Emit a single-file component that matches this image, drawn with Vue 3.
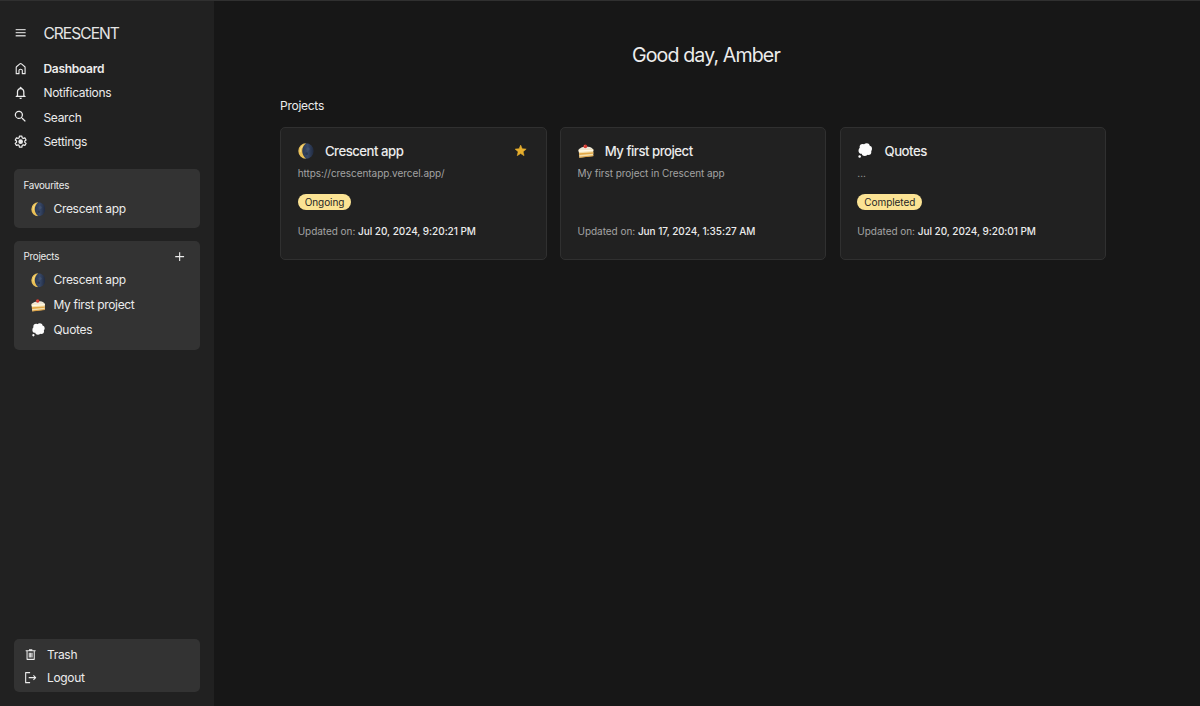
<script setup>
const nav = [
  { label: 'Dashboard', icon: 'home', active: true },
  { label: 'Notifications', icon: 'bell' },
  { label: 'Search', icon: 'search' },
  { label: 'Settings', icon: 'gear' },
]
const projects = [
  { name: 'Crescent app', icon: 'moon', desc: 'https://crescentapp.vercel.app/', status: 'Ongoing', updated: 'Jul 20, 2024, 9:20:21 PM', star: true },
  { name: 'My first project', icon: 'cake', desc: 'My first project in Crescent app', status: '', updated: 'Jun 17, 2024, 1:35:27 AM' },
  { name: 'Quotes', icon: 'thought', desc: '...', status: 'Completed', updated: 'Jul 20, 2024, 9:20:01 PM' },
]
</script>

<template>
  <svg class="defs" aria-hidden="true">
    <defs>
      <linearGradient id="night" x1="0" x2="1"><stop offset="0" stop-color="#222c42" /><stop offset=".6" stop-color="#384969" /><stop offset="1" stop-color="#202a40" /></linearGradient>
      <symbol id="menu" viewBox="0 0 24 24"><path d="M3 6.500h18M3 12h18M3 17.500h18" fill="none" stroke="currentColor" stroke-width="2.600" /></symbol>
      <symbol id="home" viewBox="0 0 24 24"><path d="M4 21V9.5Q4 9 4.500 8.500L10.500 3.500Q12 2.300 13.500 3.500L19.500 8.500Q20 9 20 9.500V21H15V15Q15 13 12 13T9 15V21Z" fill="none" stroke="currentColor" stroke-width="2" stroke-linejoin="round" /></symbol>
      <symbol id="bell" viewBox="1.500 1.500 21 21"><path d="M12 22c1.100 0 2-.9 2-2h-4c0 1.100.9 2 2 2zm6-6v-5c0-3.070-1.630-5.640-4.500-6.320V4a1.500 1.500 0 0 0-3 0v.68C7.640 5.360 6 7.920 6 11v5l-2 2v1h16v-1l-2-2zm-2 1H8v-6c0-2.480 1.510-4.500 4-4.500s4 2.020 4 4.500v6z" fill="currentColor" /></symbol>
      <symbol id="search" viewBox="1.800 1.800 21 21"><path d="M15.500 14h-.79l-.28-.27A6.500 6.500 0 1 0 13.730 14.430l.27.28v.79l5 4.990L20.490 19l-4.990-5zm-6 0a4.500 4.500 0 1 1 0-9 4.500 4.500 0 0 1 0 9z" fill="currentColor" /></symbol>
      <symbol id="gear" viewBox="0 0 24 24"><path d="M9.800 2h4.400l.5 3 2 1.200 2.900-1.100 2.200 3.800-2.400 1.900v2.400l2.400 1.900-2.200 3.800-2.900-1.100-2 1.200-.5 3H9.800l-.5-3-2-1.200-2.900 1.100-2.200-3.800 2.400-1.900v-2.400L2.200 8.900l2.200-3.800 2.900 1.100 2-1.200Z" fill="none" stroke="currentColor" stroke-width="2.200" stroke-linejoin="round" /><circle cx="12" cy="12" r="4.200" fill="currentColor" /></symbol>
      <symbol id="plus" viewBox="0 0 24 24"><path d="M12 4v16M4 12h16" fill="none" stroke="currentColor" stroke-width="2" /></symbol>
      <symbol id="trash" viewBox="0 0 24 24"><path d="M3 5h18M9 3h6M5.500 5v15.500h13V5M9.500 8.500V17M12 8.500V17M14.500 8.500V17" fill="none" stroke="currentColor" stroke-width="1.900" stroke-linejoin="round" /></symbol>
      <symbol id="logout" viewBox="0 0 24 24"><path d="M11 3H3v18h8M8.500 12H21M17 8l4 4-4 4" fill="none" stroke="currentColor" stroke-width="2" stroke-linejoin="round" /></symbol>
      <symbol id="star" viewBox="0 0 24 24"><path d="M12 17.270 18.180 21l-1.640-7.030L22 9.240l-7.190-.61L12 2 9.190 8.630 2 9.240l5.460 4.730L5.820 21z" fill="currentColor" stroke="currentColor" stroke-linejoin="round" /></symbol>
      <symbol id="moon" viewBox="0 0 24 24">
        <circle cx="12" cy="12" r="11.500" fill="url(#night)" />
        <path d="M12 .5A11.500 11.500 0 0 0 12 23.500Q6.300 18.500 6.300 12T12 .5Z" fill="#e9bf55" />
        <path d="M7 4Q3.200 7.500 3.500 14" fill="none" stroke="#f6db85" stroke-width="1.600" />
        <circle cx="15" cy="9" r="2.500" fill="#40506d" /><circle cx="13" cy="16" r="2" fill="#293750" />
      </symbol>
      <symbol id="cake" viewBox="0 0 24 24">
        <path d="M1 9.500Q6 4.500 15 5.500Q21.500 6 23 10.500L1 12Z" fill="#eee8d8" />
        <path d="M1 10.500 23 9.500V19.500L2 22Z" fill="#f4dfac" />
        <path d="M1 11 23 10V12L1.200 13.500Z" fill="#fff9e8" />
        <path d="M1.500 15.500 23 14V16L1.700 18Z" fill="#e2a848" />
        <path d="M2 20.500 23 18.200V20L2 22.300Z" fill="#d99d40" />
        <circle cx="11" cy="5" r="2.800" fill="#d63b32" /><circle cx="10" cy="4.200" r=".8" fill="#f18a79" />
      </symbol>
      <symbol id="thought" viewBox="0 0 24 24">
        <g fill="#fcfcfc"><circle cx="8.500" cy="6" r="4.600" /><circle cx="14.500" cy="5" r="4.600" /><circle cx="18" cy="8.500" r="4.500" /><circle cx="17" cy="13.500" r="4.500" /><circle cx="11.500" cy="15" r="4.500" /><circle cx="7" cy="11.500" r="4.700" /><circle cx="12" cy="10" r="6" /><circle cx="4" cy="20.300" r="1.900" /></g>
      </symbol>
    </defs>
  </svg>
  <div class="app">
    <aside class="sidebar">
      <header class="brand"><svg class="icon"><use href="#menu" /></svg><span>CRESCENT</span></header>
      <nav>
        <a v-for="n in nav" :key="n.label" class="nav-item" :class="{ active: n.active }">
          <svg class="icon"><use :href="'#' + n.icon" /></svg><span>{{ n.label }}</span>
        </a>
      </nav>
      <section class="panel favourites">
        <div class="panel-head">Favourites</div>
        <a class="project-link"><svg class="emoji"><use href="#moon" /></svg><span>Crescent app</span></a>
      </section>
      <section class="panel list">
        <div class="panel-head">Projects<svg class="plus"><use href="#plus" /></svg></div>
        <a v-for="p in projects" :key="p.name" class="project-link"><svg class="emoji"><use :href="'#' + p.icon" /></svg><span>{{ p.name }}</span></a>
      </section>
      <section class="panel bottom">
        <a class="action"><svg class="icon"><use href="#trash" /></svg><span>Trash</span></a>
        <a class="action"><svg class="icon"><use href="#logout" /></svg><span>Logout</span></a>
      </section>
    </aside>
    <main>
      <h1>Good day, Amber</h1>
      <h2>Projects</h2>
      <div class="cards">
        <article v-for="p in projects" :key="p.name" class="card">
          <div class="card-head"><svg class="card-emoji"><use :href="'#' + p.icon" /></svg><h3>{{ p.name }}</h3><svg v-if="p.star" class="star"><use href="#star" /></svg></div>
          <p class="desc">{{ p.desc }}</p>
          <div class="status"><span v-if="p.status" class="badge">{{ p.status }}</span></div>
          <p class="updated">Updated on: <b>{{ p.updated }}</b></p>
        </article>
      </div>
    </main>
  </div>
</template>

<style>
body { background: #171717; }
</style>
<style scoped>
* { box-sizing: border-box; }
.defs { position: absolute; width: 0; height: 0; }
.app { display: flex; height: 706px; overflow: hidden; background: #171717; border-top: 1px solid #303030; color: #ececec; font-family: Inter, "Liberation Sans", sans-serif; font-size: 12px; letter-spacing: -.28px; }
svg { flex: none; display: block; }
.sidebar { width: 213.500px; flex: none; display: flex; flex-direction: column; padding: 20px 13.400px 13.700px 13.500px; background: #212121; }
.icon { width: 13.300px; height: 13.300px; }
.brand { display: flex; align-items: center; gap: 16px; height: 24px; padding-left: .6px; font-size: 15.600px; letter-spacing: -.98px; color: #e5e5e5; }
.brand .icon { color: #c8c8c8; }
nav { margin-top: 11.600px; }
.nav-item { display: flex; align-items: center; gap: 16px; height: 24.200px; padding-left: .6px; }
.active { font-weight: 600; }
.panel { background: #333; border-radius: 5px; }
.favourites { margin-top: 15.900px; height: 58.500px; padding-top: 5.300px; }
.list { margin-top: 13.300px; height: 108.500px; padding-top: 4.700px; }
.panel-head { display: flex; justify-content: space-between; align-items: center; height: 21px; padding: 0 13.400px 0 10px; font-size: 9.800px; letter-spacing: -.25px; }
.plus { width: 13.300px; height: 13.300px; }
.project-link { display: flex; align-items: center; gap: 8.500px; height: 25px; padding-left: 17px; letter-spacing: -.32px; }
.project-link span { position: relative; top: .5px; }
.emoji { width: 14.500px; height: 14.500px; margin-top: 2.500px; }
.bottom { margin-top: auto; height: 53.300px; padding: 3.500px 0 0 10.900px; }
.action { display: flex; align-items: center; gap: 9.200px; height: 23.300px; }
main { flex: 1; padding: 40px 66.600px 0; }
h1, h2, h3, p { margin: 0; font-weight: 400; }
h1 { height: 28px; line-height: 28px; padding-right: 1.600px; text-align: center; font-size: 19.600px; letter-spacing: -.88px; }
h2 { height: 16px; margin-top: 28.500px; font-size: 12px; line-height: 16px; }
.cards { display: grid; grid-template-columns: repeat(3, 1fr); gap: 13.300px; margin: 13.500px 27.100px 0 0; }
.card { height: 133.300px; padding: 14px 17px 0 16.600px; border: 1px solid #303030; border-radius: 5px; background: #212121; }
.card-head { display: flex; align-items: center; height: 17px; }
.card-emoji { width: 16px; height: 16px; }
h3 { flex: 1; margin-left: 11.200px; font-size: 13.200px; font-weight: 500; letter-spacing: -.5px; }
.star { width: 13.300px; height: 13.300px; color: #e6ae2e; margin-right: 1.200px; }
.desc { height: 14px; line-height: 14px; margin-top: 7px; font-size: 10px; letter-spacing: -.06px; color: #a3a3a3; }
.status { height: 16px; margin-top: 14px; display: flex; }
.badge { display: flex; align-items: center; height: 15.500px; padding: 0 7px; border-radius: 8px; background: #fbe394; color: #262626; font-size: 10px; letter-spacing: -.08px; }
.updated { margin-top: 14px; line-height: 14px; font-size: 10px; letter-spacing: -.04px; color: #a3a3a3; }
.updated b { font-weight: 500; color: #ececec; }
</style>
